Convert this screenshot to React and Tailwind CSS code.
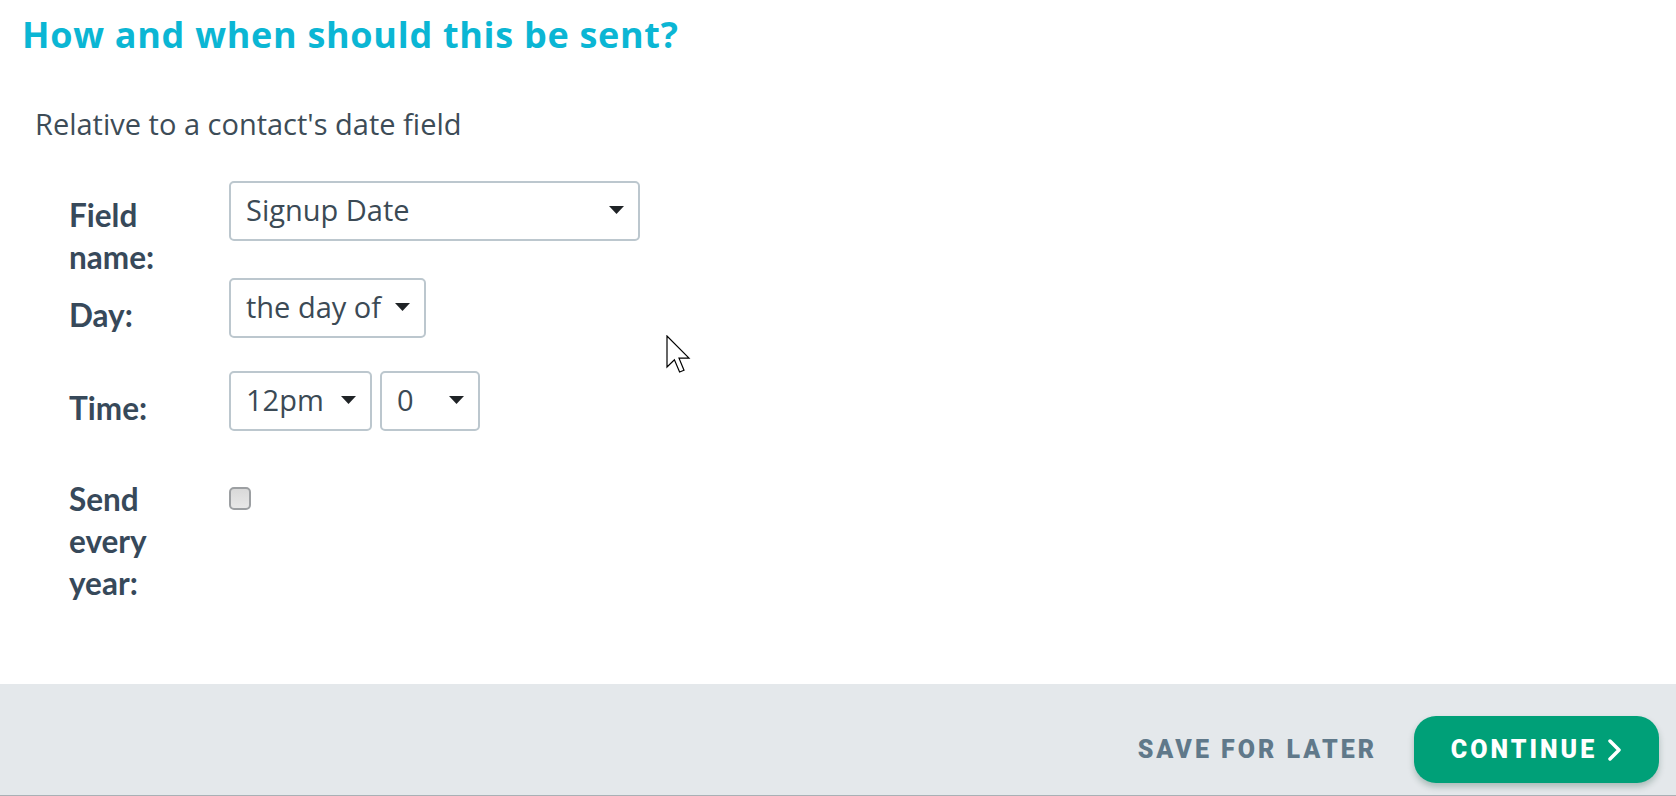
import React from "react";

const sans = { fontFamily: '"Open Sans", "Noto Sans", sans-serif' };
const lato = { fontFamily: 'Lato, "Open Sans", sans-serif' };
const btn = { fontFamily: 'Roboto, "Liberation Sans", sans-serif' };

function Caret() {
  return (
    <svg width="15" height="8" viewBox="0 0 15 8" className="shrink-0">
      <path d="M0 0 H15 L7.5 8 Z" fill="#1f2326" />
    </svg>
  );
}

function Select({ value, width }) {
  return (
    <div
      className="h-[60px] flex items-center justify-between pl-[15px] pr-[14px] pb-[3px] border-2 border-[#bcc7ce] rounded-[5px] bg-white text-[29px] text-[#3b4a55]"
      style={{ ...sans, width }}
    >
      <span className="whitespace-nowrap">{value}</span>
      <Caret />
    </div>
  );
}

function Label({ children, low }) {
  return (
    <div
      className={`w-[160px] shrink-0 ${low ? "pt-[16px]" : "pt-[13px]"} text-[31.5px] leading-[42px] font-bold text-[#37495a]`}
      style={lato}
    >
      {children}
    </div>
  );
}

export default function App() {
  return (
    <div className="relative w-[1676px] h-[796px] flex flex-col bg-white overflow-hidden">
      <main className="flex-1 pl-[22px] pt-[15px]">
        <h1
          className="text-[36px] leading-[40px] font-bold tracking-[0.7px] text-[#0bb6d4]"
          style={sans}
        >
          How and when should this be sent?
        </h1>
        <p
          className="mt-[54px] ml-[13px] text-[29px] leading-[30px] text-[#3d4c57]"
          style={sans}
        >
          Relative to a contact's date field
        </p>

        <div className="ml-[47px] mt-[42px] flex flex-col">
          {/* field name */}
          <div className="flex items-start">
            <Label>
              Field
              <br />
              name:
            </Label>
            <Select value="Signup Date" width="411px" />
          </div>
          {/* day */}
          <div className="flex items-start">
            <Label low>Day:</Label>
            <Select value="the day of" width="197px" />
          </div>
          {/* time */}
          <div className="flex items-start mt-[33px]">
            <Label low>Time:</Label>
            <div className="flex gap-[8px]">
              <Select value="12pm" width="143px" />
              <Select value="0" width="100px" />
            </div>
          </div>
          {/* yearly */}
          <div className="flex items-start mt-[34px]">
            <Label>
              Send
              <br />
              every
              <br />
              year:
            </Label>
            <div className="mt-[22px] w-[22px] h-[23px] rounded-[5px] border-2 border-[#9c9fa2] bg-gradient-to-b from-[#d9d9d9] to-[#e8e8e8]" />
          </div>
        </div>
      </main>

      <footer className="h-[112px] shrink-0 bg-[#e4e8eb] border-b border-[#a9b0b5] flex justify-end items-start pt-[32px] pr-[17px]">
        <button
          className="h-[67px] mr-[37px] text-[25px] font-black tracking-[3px] text-[#60798a]"
          style={btn}
        >
          SAVE FOR LATER
        </button>
        <button
          className="w-[245px] h-[67px] rounded-[22px] bg-[#00a078] shadow-[0_4px_6px_rgba(0,60,40,0.25)] flex items-center justify-center gap-[10px] text-white text-[25px] font-black tracking-[3px]"
          style={btn}
        >
          CONTINUE
          <svg width="15" height="22" viewBox="0 0 15 22">
            <path
              d="M3 2 L12 11 L3 20"
              fill="none"
              stroke="#fff"
              strokeWidth="3.5"
              strokeLinecap="round"
              strokeLinejoin="round"
            />
          </svg>
        </button>
      </footer>

      {/* mouse pointer */}
      <svg
        className="absolute left-[666px] top-[335px]"
        width="26"
        height="39"
        viewBox="0 0 13 19.5"
      >
        <path
          d="M0.5 0.5 L0.5 16 L4.2 12.4 L6.8 18.5 L9 17.6 L6.5 11.6 L11.5 11.6 Z"
          fill="#fff"
          stroke="#000"
          strokeWidth="0.6"
          strokeLinejoin="miter"
        />
      </svg>
    </div>
  );
}
